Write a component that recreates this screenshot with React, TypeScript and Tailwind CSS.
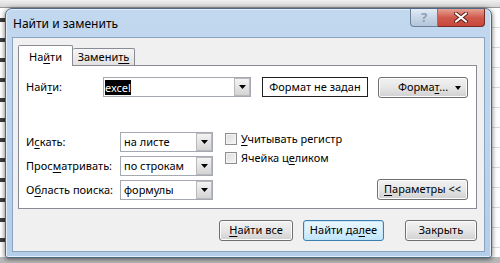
import React from 'react';

const U = ({ children }: { children: React.ReactNode }) => (
  <span className="underline underline-offset-[2px] decoration-[1px]">{children}</span>
);

function Arrow() {
  return (
    <svg width="7" height="4" viewBox="0 0 7 4" className="block">
      <path d="M0 0H7L3.5 4Z" fill="#000" />
    </svg>
  );
}

function Select({ value }: { value: string }) {
  return (
    <div className="flex h-[20px] w-[93px] border border-[#a5a9b2] bg-white">
      <div className="flex-1 pl-[3px] leading-[18px]">{value}</div>
      <div className="flex w-[16px] items-center justify-center border border-[#b9b9b9] bg-gradient-to-b from-[#f4f4f4] to-[#d4d4d4]">
        <Arrow />
      </div>
    </div>
  );
}

function WinButton({
  children,
  className = '',
  focused = false,
}: {
  children: React.ReactNode;
  className?: string;
  focused?: boolean;
}) {
  return (
    <div
      className={
        'flex h-[21px] items-center justify-center rounded-[3px] border ' +
        (focused
          ? 'border-[#3c7fb1] bg-gradient-to-b from-[#eaf6fd] via-[#d9f0fc] to-[#bee6fd] shadow-[inset_0_0_0_1px_#c6e4f7]'
          : 'border-[#707070] bg-gradient-to-b from-[#f2f2f2] via-[#e6e6e6] to-[#d0d0d0] shadow-[inset_0_0_0_1px_#fcfcfc]') +
        ' ' +
        className
      }
    >
      {children}
    </div>
  );
}

function Checkbox({ children }: { children: React.ReactNode }) {
  return (
    <div className="flex h-[12px] items-center">
      <div className="h-[12px] w-[12px] border border-[#8e8f8f] bg-gradient-to-br from-[#dcdcdc] to-[#f6f6f6] shadow-[inset_0_0_0_1px_#f4f4f4]" />
      <span className="ml-[4px]">{children}</span>
    </div>
  );
}

export default function App() {
  return (
    <div className="relative h-[263px] w-[500px] overflow-hidden whitespace-nowrap bg-white font-['Noto_Sans',sans-serif] text-[11px] text-black">
      {/* excel sheet behind */}
      <div className="absolute inset-x-0 top-0 h-[8px] border-b border-[#9a9a9a] bg-gradient-to-b from-[#f0f0f0] to-[#d6d6d6]" />
      <div className="absolute left-0 top-[8px] h-[255px] w-[6px] bg-[repeating-linear-gradient(180deg,#ffffff_0px,#ffffff_10px,#3c3c3c_10px,#3c3c3c_14px,#ffffff_14px,#ffffff_20px)]" />
      <div className="absolute right-0 top-[8px] h-[255px] w-[10px] bg-[repeating-linear-gradient(180deg,#ffffff_0px,#ffffff_19px,#d5dbe5_19px,#d5dbe5_20px)]" />
      <div className="absolute inset-x-0 bottom-0 h-[6px] bg-[#b8b8b8]" />

      {/* dialog window */}
      <div className="absolute left-[5px] top-[8px] flex h-[250px] w-[487px] flex-col rounded-t-[7px] rounded-b-[3px] border border-[#4e6785] bg-gradient-to-b from-[#c2d8ef] via-[#bcd4ed] to-[#b4cde8] px-[6px] pb-[5px] shadow-[0_1px_5px_rgba(0,0,0,0.6),inset_0_0_0_1px_#e4eef9]">
        <div className="flex h-[28px] items-start">
          <div className="pl-[1px] pt-[6px] text-[12px] leading-[18px]">Найти и заменить</div>
          <div className="ml-auto flex h-[18px]">
            <div className="flex w-[28px] items-center justify-center rounded-bl-[4px] border border-t-0 border-[#6d809a] bg-gradient-to-b from-[#e3ecf6] via-[#c8d6e6] to-[#b3c5da] text-[13px] font-bold leading-none text-[#8ea0b8]">
              ?
            </div>
            <div className="flex w-[47px] items-center justify-center rounded-br-[4px] border border-l-0 border-t-0 border-[#7a2a22] bg-gradient-to-b from-[#e5a194] via-[#cf5b4d] to-[#c7463a]">
              <svg width="14" height="11" viewBox="0 0 14 11">
                <path d="M2 1.5L12 9.5M12 1.5L2 9.5" stroke="#5a1e18" strokeWidth="4" strokeLinecap="round" />
                <path d="M2 1.5L12 9.5M12 1.5L2 9.5" stroke="#ffffff" strokeWidth="2.2" strokeLinecap="round" />
              </svg>
            </div>
          </div>
        </div>

        <div className="flex flex-1 flex-col border border-[#8aa3c1] bg-[#f0f0f0] pl-[5px] pr-[7px] pt-[7px]">
          {/* tabs */}
          <div className="relative z-10 flex h-[20px] items-end">
            <div className="mb-[-1px] flex h-[21px] w-[55px] items-start justify-center rounded-t-[2px] border border-b-0 border-[#898c95] bg-white pt-[3px]">
              На<U>й</U>ти
            </div>
            <div className="flex h-[17px] w-[62px] items-center justify-center rounded-t-[2px] border border-b-0 border-l-0 border-[#898c95] bg-gradient-to-b from-[#f6f6f6] to-[#e1e1e1]">
              Замени<U>ть</U>
            </div>
          </div>

          {/* panel */}
          <div className="flex h-[144px] flex-col border border-[#898c95] bg-white pl-[7px] pr-[8px] pt-[11px]">
            <div className="flex h-[20px] items-center">
              <div className="w-[77px]">
                Най<U>т</U>и:
              </div>
              <div className="flex h-[20px] w-[148px] border border-[#a5a9b2] bg-white">
                <div className="flex flex-1 items-center pl-[1px]">
                  <span className="bg-black leading-[15px] text-white">excel</span>
                </div>
                <div className="flex w-[16px] items-center justify-center border border-[#b9b9b9] bg-gradient-to-b from-[#f4f4f4] to-[#d4d4d4]">
                  <Arrow />
                </div>
              </div>
              <div className="ml-[11px] flex h-[20px] w-[106px] items-center justify-center border border-[#202020] bg-white">
                Формат не задан
              </div>
              <WinButton className="relative ml-[10px] w-[90px]">
                <span>
                  Форма<U>т</U>...
                </span>
                <span className="absolute right-[6px] top-[8px]">
                  <svg width="6" height="4" viewBox="0 0 6 4" className="block">
                    <path d="M0 0H6L3 4Z" fill="#000" />
                  </svg>
                </span>
              </WinButton>
            </div>

            <div className="mt-[35px] flex">
              <div className="flex flex-col gap-[4px]">
                <div className="flex h-[20px] items-center">
                  <div className="w-[94px]">
                    И<U>с</U>кать:
                  </div>
                  <Select value="на листе" />
                </div>
                <div className="flex h-[20px] items-center">
                  <div className="w-[94px]">
                    Прос<U>м</U>атривать:
                  </div>
                  <Select value="по строкам" />
                </div>
                <div className="flex h-[20px] items-center">
                  <div className="w-[94px]">
                    О<U>б</U>ласть поиска:
                  </div>
                  <Select value="формулы" />
                </div>
              </div>
              <div className="ml-[12px] flex flex-col gap-[7px] pt-[1px]">
                <Checkbox>
                  <U>У</U>читывать регистр
                </Checkbox>
                <Checkbox>
                  Ячейка ц<U>е</U>ликом
                </Checkbox>
              </div>
              <div className="flex-1" />
              <WinButton className="w-[91px] self-end">
                <span>
                  <U>П</U>араметры &lt;&lt;
                </span>
              </WinButton>
            </div>
          </div>

          {/* bottom buttons */}
          <div className="mt-[11px] flex justify-end">
            <WinButton className="w-[74px]">
              <span>
                <U>Н</U>айти все
              </span>
            </WinButton>
            <WinButton focused className="ml-[10px] w-[81px]">
              <span>
                Найти да<U>л</U>ее
              </span>
            </WinButton>
            <WinButton className="ml-[21px] w-[72px]">
              <span>Закрыть</span>
            </WinButton>
          </div>
        </div>
      </div>
    </div>
  );
}
